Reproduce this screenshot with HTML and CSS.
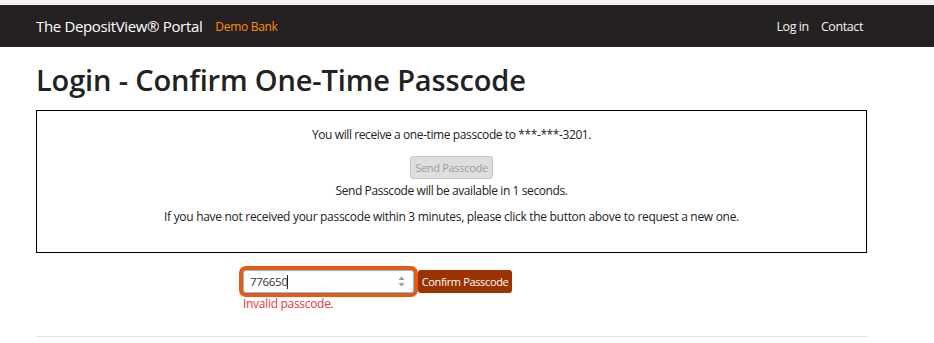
FILE: index.html
```html
<!DOCTYPE html>
<html lang="en">
<head>
<meta charset="utf-8">
<title>Login - Confirm One-Time Passcode</title>
<link rel="stylesheet" href="styles.css">
</head>
<body>
<div class="top-strip"></div>
<nav class="navbar">
  <div class="container nav-inner">
    <a class="brand" href="#">The DepositView® Portal</a>
    <span class="bank">Demo Bank</span>
    <ul class="nav-links">
      <li><a href="#">Log in</a></li>
      <li><a href="#">Contact</a></li>
    </ul>
  </div>
</nav>
<main class="container">
  <h1 class="page-title">Login - Confirm One-Time Passcode</h1>
  <section class="otp-box">
    <p class="otp-line">You will receive a one-time passcode to ***-***-3201.</p>
    <button class="btn-send" type="button" disabled>Send Passcode</button>
    <p class="otp-line tight">Send Passcode will be available in 1 seconds.</p>
    <p class="otp-line wide">If you have not received your passcode within 3 minutes, please click the button above to request a new one.</p>
  </section>
  <form class="confirm-form">
    <div class="confirm-row">
      <div class="input-wrap">
        <input class="code-input" type="text" value="776650">
        <span class="caret"></span>
        <svg class="spinner" width="7" height="11" viewBox="0 0 7 11"><path d="M3.5 0.5 L6.5 4 H0.5 Z" fill="#9a9a9a"/><path d="M3.5 10.5 L6.5 7 H0.5 Z" fill="#9a9a9a"/></svg>
      </div>
      <button class="btn-confirm" type="button">Confirm Passcode</button>
    </div>
    <div class="error">Invalid passcode.</div>
  </form>
  <hr class="rule">
</main>
</body>
</html>
```
FILE: styles.css
```css
* { box-sizing: border-box; }
html, body { margin: 0; padding: 0; background: #fff; }
body {
  font-family: "Open Sans", "Noto Sans", sans-serif;
  font-size: 12px;
  color: #222;
}
.top-strip { height: 5px; background: #f3f3f3; }
.navbar { background: #252122; height: 42px; }
.container { padding: 0 67px 0 36px; }
.nav-inner { display: flex; align-items: center; height: 42px; }
.brand {
  color: #fff; text-decoration: none; font-size: 15px;
  letter-spacing: -0.35px;
}
.bank { color: #ff8c00; font-size: 12px; letter-spacing: -0.3px; margin-left: 13px; }
.nav-links { list-style: none; margin: 0 4px 0 auto; padding: 0; display: flex; gap: 12px; }
.nav-links a { color: #f2f2f2; text-decoration: none; font-size: 12.5px; letter-spacing: -0.4px; }
.page-title {
  margin: 16px 0 0; font-size: 29px; font-weight: 600; color: #222;
  line-height: 34px; letter-spacing: -0.15px;
}
.otp-box {
  margin-top: 13px; border: 1px solid #000; height: 143px;
  display: flex; flex-direction: column; align-items: center; padding-top: 15px;
}
.otp-line { margin: 0 0 14px; line-height: 17px; letter-spacing: -0.4px; }
.otp-line.tight { margin-top: 3px; margin-bottom: 9px; }
.otp-line.wide { letter-spacing: -0.3px; }
.btn-send {
  font-family: inherit; font-size: 11px; color: #9b9b9b; letter-spacing: -0.3px;
  background: #dedede; border: 1px solid #c8c8c8; border-radius: 3px;
  width: 83px; height: 23px; padding: 0; margin-top: -1px;
}
.confirm-form { margin-top: 17px; padding-left: 207px; }
.confirm-row { display: flex; align-items: center; }
.input-wrap { position: relative; }
.code-input {
  width: 171px; height: 23px; border: 1px solid #80bdff; border-radius: 3px;
  box-shadow: 0 0 0 4px #ea5a0c; outline: none;
  font-family: inherit; font-size: 11.5px; color: #333; padding: 0 0 0 6px;
  letter-spacing: -0.3px;
}
.caret { position: absolute; left: 44px; top: 5px; width: 1px; height: 14px; background: #222; }
.spinner { position: absolute; right: 9px; top: 6px; }
.btn-confirm {
  margin-left: 4px; height: 23px; width: 94px; padding: 0;
  background: #9a3300; color: #fff; border: none; border-radius: 3px;
  font-family: inherit; font-size: 11px; letter-spacing: -0.35px;
}
.error { color: #e8334a; margin-top: 3px; font-size: 12px; line-height: 16px; letter-spacing: -0.3px; }
.rule { border: none; border-top: 1px solid #e2e2e2; margin: 24px 0 0; }
```
